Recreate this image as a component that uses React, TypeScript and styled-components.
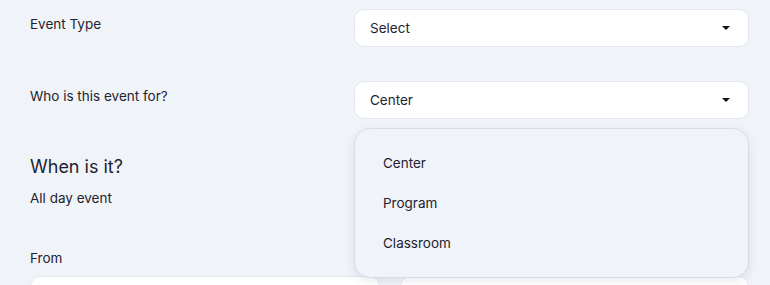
import styled, { createGlobalStyle } from 'styled-components';

const GlobalStyle = createGlobalStyle`
  html, body {
    margin: 0;
    padding: 0;
    background-color: #f0f3f8;
    font-family: Inter, 'Noto Sans', sans-serif;
    color: #1e2330;
  }
`;

const Page = styled.div`
  padding: 9px 21px 0 30px;
  height: 285px;
  overflow: hidden;
  box-sizing: border-box;
`;

const FieldRow = styled.div`
  display: grid;
  grid-template-columns: 324px 1fr;
  align-items: start;
  margin-bottom: 34px;
`;

const Label = styled.div`
  font-size: 13.5px;
  line-height: 20px;
  padding-top: 5px;
`;

const SelectWrap = styled.div`
  position: relative;
`;

const SelectBox = styled.div`
  display: flex;
  align-items: center;
  justify-content: space-between;
  height: 38px;
  box-sizing: border-box;
  padding: 0 18px 0 15px;
  background-color: #ffffff;
  border: 1px solid #e3e7ef;
  border-radius: 10px;
  font-size: 13.5px;
`;

const Caret = styled.span`
  width: 0;
  height: 0;
  border-left: 4px solid transparent;
  border-right: 4px solid transparent;
  border-top: 4px solid #111111;
`;

const Menu = styled.ul`
  position: absolute;
  top: 47px;
  left: 0;
  right: 0;
  z-index: 2;
  margin: 0;
  padding: 14px 0 14px 28px;
  list-style: none;
  background-color: #f0f3f9;
  border: 1px solid #d8dce6;
  border-radius: 16px;
  box-shadow: 0 3px 10px rgba(40, 50, 80, 0.1);
`;

const MenuItem = styled.li`
  font-size: 13.5px;
  line-height: 40px;
`;

const Heading = styled.h2`
  margin: 0;
  padding-top: 2px;
  font-size: 18px;
  font-weight: 400;
  line-height: 24px;
`;

const SubLabel = styled.div`
  font-size: 13.5px;
  line-height: 20px;
  margin-top: 9px;
`;

const FromLabel = styled(SubLabel)`
  margin-top: 40px;
`;

const DateRow = styled.div`
  display: grid;
  grid-template-columns: 1fr 1fr;
  gap: 20px;
  margin-top: 8px;
`;

const DateInput = styled.div`
  height: 38px;
  background-color: #ffffff;
  border: 1px solid #e3e7ef;
  border-radius: 10px;
`;

const Select = ({ value, options }: { value: string; options?: string[] }) => (
  <SelectWrap>
    <SelectBox>
      {value}
      <Caret />
    </SelectBox>
    {options && (
      <Menu>
        {options.map(o => (
          <MenuItem key={o}>{o}</MenuItem>
        ))}
      </Menu>
    )}
  </SelectWrap>
);

const App = () => {
  return (
    <>
      <GlobalStyle />
      <Page>
        <FieldRow>
          <Label>Event Type</Label>
          <Select value="Select" />
        </FieldRow>
        <FieldRow>
          <Label>Who is this event for?</Label>
          <Select value="Center" options={['Center', 'Program', 'Classroom']} />
        </FieldRow>
        <Heading>When is it?</Heading>
        <SubLabel>All day event</SubLabel>
        <FromLabel>From</FromLabel>
        <DateRow>
          <DateInput />
          <DateInput />
        </DateRow>
      </Page>
    </>
  );
};

export default App;
